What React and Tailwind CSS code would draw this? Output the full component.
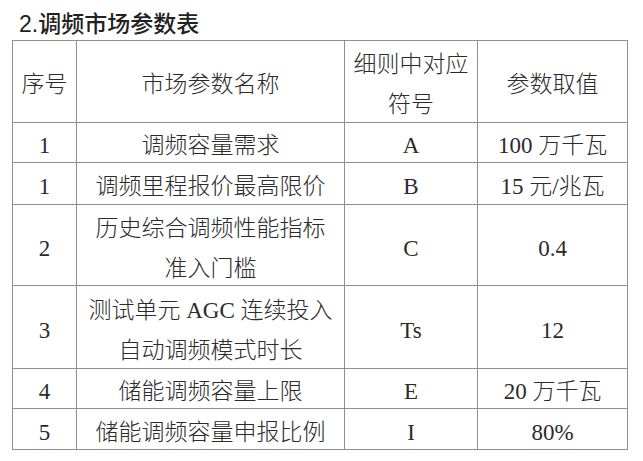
import React from "react";

const rows = [
  { h: "h-[40px]", no: "1", name: ["调频容量需求"], sym: "A", val: "100 万千瓦" },
  { h: "h-[42px]", no: "1", name: ["调频里程报价最高限价"], sym: "B", val: "15 元/兆瓦" },
  { h: "h-[81px]", no: "2", name: ["历史综合调频性能指标", "准入门槛"], sym: "C", val: "0.4" },
  { h: "h-[83px]", no: "3", name: ["测试单元 AGC 连续投入", "自动调频模式时长"], sym: "Ts", val: "12" },
  { h: "h-[40px]", no: "4", name: ["储能调频容量上限"], sym: "E", val: "20 万千瓦" },
  { h: "h-[41px]", no: "5", name: ["储能调频容量申报比例"], sym: "I", val: "80%" },
];

function Cell({ w, children }) {
  return (
    <div
      className={`${w} shrink-0 h-full border-r border-b border-[#8f8f8f] flex flex-col items-center justify-center pt-[7px] text-center leading-[40px]`}
    >
      {children}
    </div>
  );
}

function Lines({ lines }) {
  return lines.map((l, i) => (
    <div key={i} className="whitespace-nowrap">
      {l}
    </div>
  ));
}

export default function App() {
  return (
    <div className="w-[643px] h-[461px] bg-white text-[#2b2b2b] overflow-hidden">
      <div className="h-[40px] pt-[9px] pl-[19px] text-[23px] leading-[30px] font-medium text-[#222] font-['Liberation_Sans','Noto_Sans_CJK_SC',sans-serif]">
        2.调频市场参数表
      </div>
      <div className="ml-[12px] w-[616px] border-l border-t border-[#8f8f8f] text-[23px] font-['Liberation_Serif','Noto_Sans_CJK_SC',serif] font-light">
        <div className="flex h-[82px]">
          <Cell w="w-[64px]">
            <Lines lines={["序号"]} />
          </Cell>
          <Cell w="w-[268px]">
            <Lines lines={["市场参数名称"]} />
          </Cell>
          <Cell w="w-[133px]">
            <Lines lines={["细则中对应", "符号"]} />
          </Cell>
          <Cell w="w-[150px]">
            <Lines lines={["参数取值"]} />
          </Cell>
        </div>
        {rows.map((r, i) => (
          <div key={i} className={`flex ${r.h}`}>
            <Cell w="w-[64px]">
              <Lines lines={[r.no]} />
            </Cell>
            <Cell w="w-[268px]">
              <Lines lines={r.name} />
            </Cell>
            <Cell w="w-[133px]">
              <Lines lines={[r.sym]} />
            </Cell>
            <Cell w="w-[150px]">
              <Lines lines={[r.val]} />
            </Cell>
          </div>
        ))}
      </div>
    </div>
  );
}
